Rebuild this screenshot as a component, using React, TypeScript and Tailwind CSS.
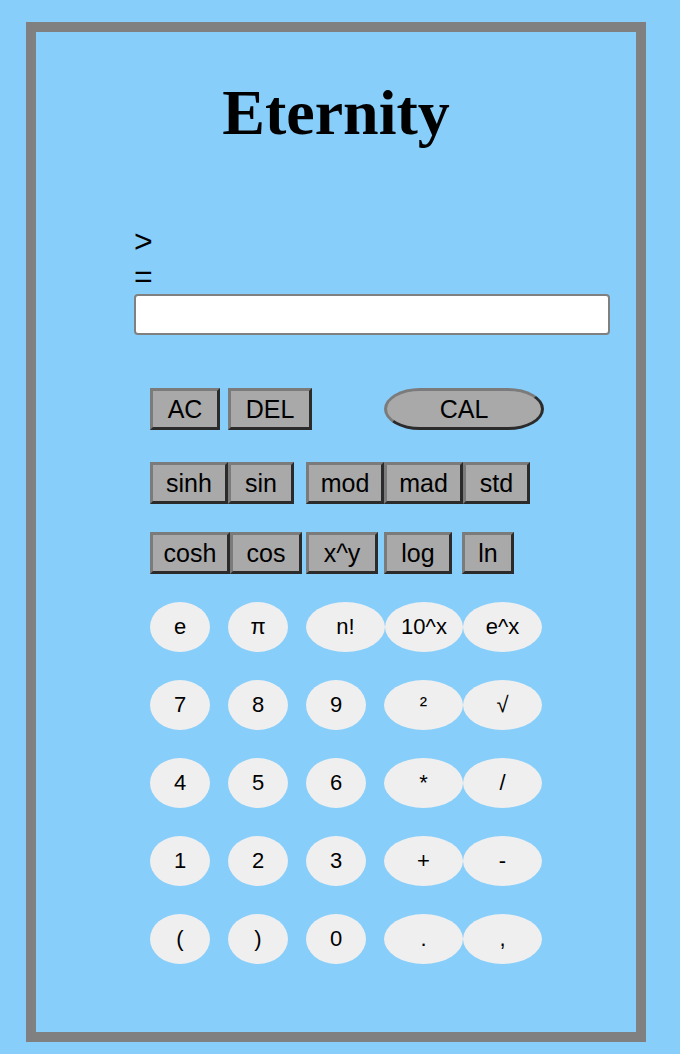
import React from "react";

const sans = "font-['Liberation_Sans',Arial,sans-serif]";

const rectKey =
	"h-[42px] shrink-0 border-[3px] border-t-[#7b7b7b] border-l-[#7b7b7b] border-b-[#2b2b2b] border-r-[#2b2b2b] bg-[#a9a9a9] text-[25px] leading-none text-black flex items-center justify-center";

const roundKey =
	"h-[50px] shrink-0 rounded-[50%] bg-[#efefef] text-[22px] leading-none text-black flex items-center justify-center";

function Rect({ label, w, ml }: { label: string; w: string; ml?: string }) {
	return <button className={`${rectKey} ${w} ${ml ?? ""}`}>{label}</button>;
}

function Round({ label, wide, ml }: { label: string; wide?: boolean; ml?: boolean }) {
	return (
		<button className={`${roundKey} ${wide ? "w-[79px]" : "w-[60px]"} ${ml ? "ml-[18px]" : ""}`}>
			{label}
		</button>
	);
}

const roundRows: string[][] = [
	["7", "8", "9", "²", "√"],
	["4", "5", "6", "*", "/"],
	["1", "2", "3", "+", "-"],
	["(", ")", "0", ".", ","],
];

export default function App() {
	return (
		<div className={`min-h-screen bg-[#87cefa] pl-[26px] pr-[34px] pt-[22px] pb-[12px] ${sans}`}>
			<div className="h-[1020px] border-[10px] border-[#808080] bg-[#87cefa]">
				<h1 className="mt-[45px] text-center font-['Liberation_Serif','Times_New_Roman',serif] text-[64px] font-bold leading-[71px] text-black">
					Eternity
				</h1>

				<div className="mt-[75px] ml-[98px] w-[476px]">
					<div className="text-[32px] leading-[36px] text-black">&gt;</div>
					<div className="text-[32px] leading-[35px] text-black">=</div>
					<input
						type="text"
						className="block h-[41px] w-full rounded-[4px] border-2 border-[#808080] bg-white"
					/>
				</div>

				<div className="mt-[53px] ml-[114px] flex flex-col">
					<div className="flex">
						<Rect label="AC" w="w-[70px]" />
						<Rect label="DEL" w="w-[84px]" ml="ml-[8px]" />
						<button className="ml-[72px] flex h-[42px] w-[160px] items-center justify-center rounded-[36px/50%] border-[3px] border-t-[#7b7b7b] border-l-[#7b7b7b] border-b-[#2b2b2b] border-r-[#2b2b2b] bg-[#a9a9a9] text-[25px] leading-none text-black">
							CAL
						</button>
					</div>

					<div className="mt-[32px] flex">
						<Rect label="sinh" w="w-[78px]" />
						<Rect label="sin" w="w-[66px]" />
						<Rect label="mod" w="w-[78px]" ml="ml-[12px]" />
						<Rect label="mad" w="w-[79px]" />
						<Rect label="std" w="w-[67px]" />
					</div>

					<div className="mt-[28px] flex">
						<Rect label="cosh" w="w-[80px]" />
						<Rect label="cos" w="w-[72px]" />
						<Rect label="x^y" w="w-[72px]" ml="ml-[4px]" />
						<Rect label="log" w="w-[68px]" ml="ml-[6px]" />
						<Rect label="ln" w="w-[52px]" ml="ml-[10px]" />
					</div>

					<div className="mt-[28px] flex">
						<Round label="e" />
						<Round label="π" ml />
						<Round label="n!" wide ml />
						<button className={`${roundKey} w-[78px]`}>10^x</button>
						<Round label="e^x" wide />
					</div>

					{roundRows.map((row) => (
						<div key={row.join("")} className="mt-[28px] flex">
							<Round label={row[0]} />
							<Round label={row[1]} ml />
							<Round label={row[2]} ml />
							<Round label={row[3]} wide ml />
							<Round label={row[4]} wide />
						</div>
					))}
				</div>
			</div>
		</div>
	);
}
